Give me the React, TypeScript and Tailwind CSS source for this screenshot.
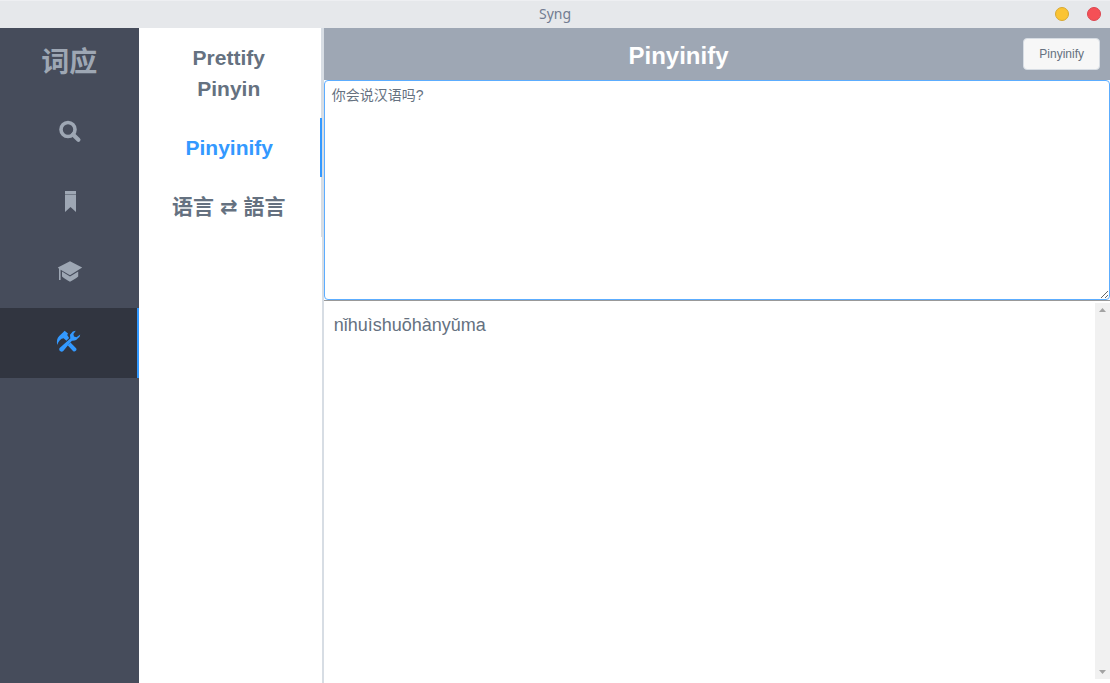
import React, { useState } from "react";

const SearchIcon = () => (
  <svg width="24" height="24" viewBox="0 0 24 24" aria-hidden="true">
    <circle cx="10" cy="9.5" r="7" fill="none" stroke="currentColor" strokeWidth="3.6" />
    <path d="M15 14.6L20.4 19.8" stroke="currentColor" strokeWidth="4.2" strokeLinecap="round" />
  </svg>
);

const BookmarkIcon = () => (
  <svg width="24" height="24" viewBox="0 0 24 24" aria-hidden="true" fill="currentColor">
    <path d="M7 1h11v3H7z" />
    <path d="M7 4h11v1H7z" opacity="0.5" />
    <path d="M7 5h11v17l-5.500-5L7 22z" />
  </svg>
);

const StudyIcon = () => (
  <svg width="26" height="24" viewBox="0 0 26 24" aria-hidden="true" fill="currentColor">
    <path d="M13 1.200L25.200 7.600 13 15.200 3.600 9.800V20H2V8.800L.8 7.600z" />
    <path d="M5 11.600L13 16.600 21.200 11.400V16.600C18.800 18.600 16 20.100 13 21.800 10 20.100 7.400 18.800 5 16.600z" />
  </svg>
);

const ToolsIcon = () => (
  <svg width="26" height="24" viewBox="0 0 26 24" aria-hidden="true" fill="currentColor">
    <path d="M1.200 15C.5 11 1 8 3.200 6L7.200 2.200 8.600.8 12 3.400 11.200 5 13.100 8 10.400 10.800 7.600 8.200C4.800 8.500 2.500 10.800 1.200 15z" />
    <path d="M13.400 13.400L16 10.800C17.500 11 18.900 10.600 20.100 10L23.600 6.800 24.200 4.400 20.500 7.300 18 6.600 17.400 3.900 19.800.8 16.800 1.600 14 4.800 14.300 8.600 3.600 18C3 19 3.100 20.200 4.100 21.100 5.200 22 6.400 21.900 7.300 20.900z" />
    <path d="M14.500 12.600L20.100 18.200C20.800 19 20.600 20 19.800 20.800 19 21.800 17.800 21.800 17 20.900L11.600 15.300z" />
  </svg>
);

const sections = [
  { id: "search", label: "Search", Icon: SearchIcon },
  { id: "bookmarks", label: "Bookmarks", Icon: BookmarkIcon },
  { id: "study", label: "Study", Icon: StudyIcon },
  { id: "tools", label: "Tools", Icon: ToolsIcon },
];

const tools = [
  { id: "prettify", label: "Prettify Pinyin" },
  { id: "pinyinify", label: "Pinyinify" },
  {
    id: "convert",
    label: (
      <>
        语言 <span className="font-['DejaVu_Sans',sans-serif]">⇄</span> 語言
      </>
    ),
  },
];

export default function App() {
  const [section, setSection] = useState("tools");
  const [tool, setTool] = useState("pinyinify");
  const [text, setText] = useState("你会说汉语吗?");

  return (
    <div className="flex h-screen flex-col bg-white font-['Liberation_Sans','Noto_Sans_CJK_SC',sans-serif] text-[#657180]">
      <header className="relative flex h-7 shrink-0 items-center justify-center border-t border-[#eeeff2] bg-[#e6e8eb] pb-0.5">
        <span className="font-['Noto_Sans',sans-serif] text-sm text-[#727c91]">Syng</span>
        <div className="absolute right-[9px] flex gap-[18px]">
          <button aria-label="Minimize" className="size-3.5 rounded-full border border-[#d8a932] bg-[#fbc434]" />
          <button aria-label="Close" className="size-3.5 rounded-full border border-[#dc4650] bg-[#f55056]" />
        </div>
      </header>

      <div className="flex min-h-0 flex-1">
        <nav className="w-1/8 shrink-0 bg-[#464c5b] text-[#9ea7b4]">
          <h1 className="flex h-[70px] items-center justify-center text-[28px] font-bold">词应</h1>
          {sections.map(({ id, label, Icon }) => (
            <button
              key={id}
              aria-label={label}
              onClick={() => setSection(id)}
              className={`flex h-[70px] w-full items-center justify-center pb-0.5 pl-px ${
                section === id ? "border-r-2 border-[#3399ff] bg-[#313540] text-[#3399ff]" : ""
              }`}
            >
              <Icon />
            </button>
          ))}
        </nav>

        <nav className="w-1/6 shrink-0 border-r-2 border-[#d7dde4]">
          {tools.map(({ id, label }) => (
            <div key={id} className="flex border-r border-[#d7dde4]">
              <button
                onClick={() => setTool(id)}
                className={`flex-1 py-3.5 text-[21px] leading-[31px] font-bold ${
                  tool === id ? "-mr-px border-r-2 border-[#3399ff] px-6 text-[#3399ff]" : "pr-[26px] pl-6"
                }`}
              >
                {label}
              </button>
            </div>
          ))}
        </nav>

        <main className="flex min-w-0 flex-1 flex-col">
          <div className="flex h-[52px] shrink-0 items-center bg-[#9ea7b4] px-2.5">
            <h2 className="flex-1 pt-1 text-center text-2xl font-bold text-white">Pinyinify</h2>
            <button className="h-8 rounded border border-[#d7dde4] bg-[#f7f7f7] px-[15px] text-xs">
              Pinyinify
            </button>
          </div>
          <textarea
            aria-label="Chinese text"
            value={text}
            onChange={(event) => setText(event.target.value)}
            className="block h-[220px] w-full shrink-0 resize rounded border border-[#5cadff] bg-white px-[7px] py-1 text-sm outline-none"
          />
          <div className="flex min-h-0 flex-1 border-t border-[#999999] pt-0.5 pb-1">
            <output className="flex-1 px-2.5 py-2 text-lg">nǐhuìshuōhànyǔma</output>
            <div className="flex w-[15px] flex-col items-center justify-between bg-[#f1f1f1] py-1 text-[#a3a3a3]" aria-hidden="true">
              <svg width="7" height="7" viewBox="0 0 7 7" fill="currentColor">
                <path d="M0 5L3.500 1 7 5z" />
              </svg>
              <svg width="7" height="7" viewBox="0 0 7 7" fill="currentColor">
                <path d="M0 2L3.500 6 7 2z" />
              </svg>
            </div>
          </div>
        </main>
      </div>
    </div>
  );
}
